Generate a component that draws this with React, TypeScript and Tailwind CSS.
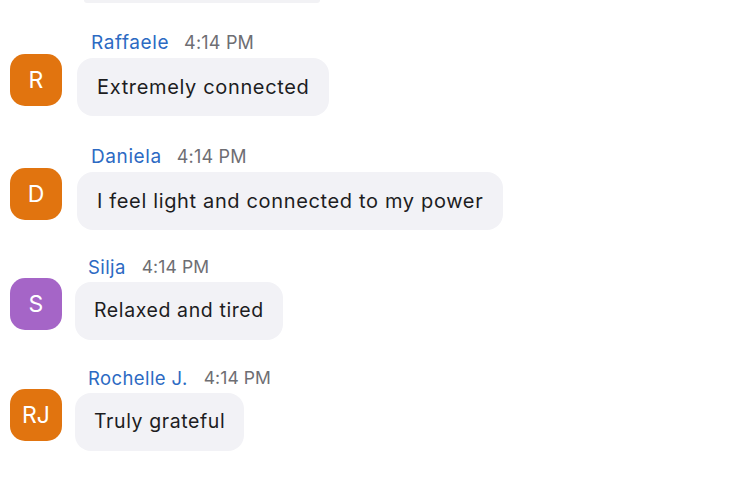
const messages = [
  { name: 'Raffaele', initials: 'R', text: 'Extremely connected', avatar: 'bg-[#e1740f]', gap: 'mt-[29px]', wide: true },
  { name: 'Daniela', initials: 'D', text: 'I feel light and connected to my power', avatar: 'bg-[#e1740f]', gap: 'mt-[30px]', wide: true },
  { name: 'Silja', initials: 'S', text: 'Relaxed and tired', avatar: 'bg-[#a565c7]', gap: 'mt-[26px]', wide: false },
  { name: 'Rochelle J.', initials: 'RJ', text: 'Truly grateful', avatar: 'bg-[#e1740f]', gap: 'mt-[27px]', wide: false },
];

export default function App() {
  return (
    <div
      className="w-[750px] h-[500px] bg-white overflow-hidden"
      style={{ fontFamily: 'Inter, "Noto Sans", sans-serif' }}
    >
      <div className="ml-[84px] h-[3px] w-[236px] rounded-b-full bg-[#f2f2f5]" />
      {messages.map((m) => (
        <div key={m.name} className={m.gap}>
          <div
            className={`flex items-center h-[22px] leading-[22px] ${
              m.wide ? 'ml-[91px] gap-[15px]' : 'ml-[88px] gap-[16px]'
            }`}
          >
            <span
              className={`text-[#2c6ac3] ${
                m.wide ? 'text-[19px] tracking-[0.6px]' : 'text-[18.5px] tracking-[0.4px]'
              }`}
            >
              {m.name}
            </span>
            <span
              className={`text-[#6e6e73] ${
                m.wide ? 'text-[18px] tracking-[0.2px]' : 'text-[17.5px] tracking-[0.1px]'
              }`}
            >
              4:14 PM
            </span>
          </div>
          <div className="flex items-start ml-[10px]">
            <div
              className={`w-[52px] h-[52px] rounded-[15px] flex items-center justify-center text-white text-[23px] ${m.avatar}`}
            >
              {m.initials}
            </div>
            <div
              className={`mt-[4px] h-[58px] flex items-center rounded-[16px] bg-[#f2f2f6] text-[#1d1d1f] ${
                m.wide
                  ? 'ml-[15px] px-[20px] text-[20px] tracking-[0.65px]'
                  : 'ml-[13px] px-[19px] text-[19.5px] tracking-[0.6px]'
              }`}
            >
              {m.text}
            </div>
          </div>
        </div>
      ))}
    </div>
  );
}
